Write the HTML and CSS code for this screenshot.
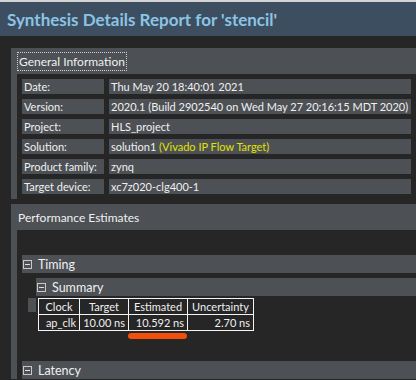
FILE: index.html
```html
<!DOCTYPE html>
<html lang="en">
<head>
    <meta charset="UTF-8">
    <meta name="viewport" content="width=device-width, initial-scale=1.0">
    <title>Synthesis Details Report</title>
    <link rel="stylesheet" href="styles.css">
</head>
<body>

    <div class="title-bar">
        <h1>Synthesis Details Report for 'stencil'</h1>
    </div>

    <div class="content">
        <!-- General information panel -->
        <div class="panel">
            <div class="panel-head"><span class="focused">General Information</span></div>
            <div class="panel-body">
                <table class="info">
                    <colgroup><col class="label-col"><col></colgroup>
                    <tr><td>Date:</td><td>Thu May 20 18:40:01 2021</td></tr>
                    <tr><td>Version:</td><td>2020.1 (Build 2902540 on Wed May 27 20:16:15 MDT 2020)</td></tr>
                    <tr><td>Project:</td><td>HLS_project</td></tr>
                    <tr><td>Solution:</td><td>solution1 <span class="flow">(Vivado IP Flow Target)</span></td></tr>
                    <tr><td>Product family:</td><td>zynq</td></tr>
                    <tr><td>Target device:</td><td>xc7z020-clg400-1</td></tr>
                </table>
            </div>
        </div>

        <!-- Performance panel -->
        <div class="panel">
            <div class="panel-head">Performance Estimates</div>
            <div class="panel-body perf">
                <div class="section">
                    <div class="section-head">
                        <svg class="toggle" width="9" height="9" viewBox="0 0 9 9"><rect x="0.5" y="0.5" width="8" height="8" fill="none" stroke="#c8c8c8"/><line x1="2" y1="4.5" x2="7" y2="4.5" stroke="#e0e0e0"/></svg>
                        Timing
                    </div>
                    <div class="section-body">
                        <div class="section inner">
                            <div class="section-head">
                                <svg class="toggle" width="9" height="9" viewBox="0 0 9 9"><rect x="0.5" y="0.5" width="8" height="8" fill="none" stroke="#c8c8c8"/><line x1="2" y1="4.5" x2="7" y2="4.5" stroke="#e0e0e0"/></svg>
                                Summary
                            </div>
                            <div class="summary">
                                <table class="timing">
                                    <colgroup><col class="c-clock"><col class="c-target"><col class="c-est"><col class="c-unc"></colgroup>
                                    <tr><th>Clock</th><th>Target</th><th>Estimated</th><th>Uncertainty</th></tr>
                                    <tr><td>ap_clk</td><td>10.00 ns</td><td class="estimated">10.592 ns<span class="mark"></span></td><td>2.70 ns</td></tr>
                                </table>
                            </div>
                        </div>
                    </div>
                </div>
                <div class="section">
                    <div class="section-head">
                        <svg class="toggle" width="9" height="9" viewBox="0 0 9 9"><rect x="0.5" y="0.5" width="8" height="8" fill="none" stroke="#c8c8c8"/><line x1="2" y1="4.5" x2="7" y2="4.5" stroke="#e0e0e0"/></svg>
                        Latency
                    </div>
                </div>
            </div>
        </div>
    </div>

</body>
</html>
```

FILE: styles.css
```css
body {
    font-family: Lato, "Open Sans", sans-serif;
    font-size: 11px;
    background-color: #262626;
    color: #f0f0f0;
    margin: 0;
    padding: 0;
    border-top: 2px solid #d4d4d4;
    overflow: hidden;
}

.title-bar {
    background-color: #3e4e61;
    height: 34px;
    padding-left: 7px;
    display: flex;
    align-items: center;
}

.title-bar h1 {
    margin: 0;
    font-size: 17px;
    font-weight: bold;
    color: #8bc4e4;
}

.content {
    padding: 12px 0 0 11px;
}

.panel {
    margin-bottom: 5px;
}

.panel-head {
    background-color: #4d5155;
    height: 26px;
    padding-left: 7px;
    display: flex;
    align-items: center;
    font-size: 12px;
}

.focused {
    outline: 1px dotted #d0d0d0;
    padding: 0 1px;
    line-height: 17px;
}

.panel-body {
    border-left: 6px solid #4d5155;
}

.info {
    width: 100%;
    table-layout: fixed;
    border-collapse: separate;
    border-spacing: 5px;
}

.label-col {
    width: 82px;
}

.info td {
    background-color: #4d5155;
    height: 15px;
    padding: 0 2px;
    line-height: 15px;
    white-space: nowrap;
    overflow: hidden;
}

.flow {
    color: #e2e200;
}

.perf {
    padding: 25px 0 0 5px;
}

.section {
    margin-bottom: 5px;
}

.section.inner {
    margin-bottom: 0;
}

.section-head {
    background-color: #4d5155;
    height: 18px;
    display: flex;
    align-items: center;
    gap: 6px;
    padding-left: 1px;
    font-size: 12.5px;
}

.section-body {
    padding: 5px 0 25px 6px;
}

.inner .section-head {
    margin-left: 8px;
}

/* small grey stub left of the summary table */
.summary {
    display: flex;
    align-items: flex-start;
    gap: 2px;
    padding-top: 2px;
}

.summary::before {
    content: "";
    width: 8px;
    height: 14px;
    background-color: #4d5155;
}

.timing {
    table-layout: fixed;
    border-collapse: collapse;
}

.c-clock { width: 41px; }
.c-target { width: 49px; }
.c-est { width: 59px; }
.c-unc { width: 66px; }

.timing th,
.timing td {
    border: 1px solid #f4f4f4;
    font-weight: normal;
    padding: 0 3px;
    height: 15px;
    line-height: 15px;
    white-space: nowrap;
}

.timing td {
    text-align: right;
}

.estimated {
    position: relative;
}

.mark {
    position: absolute;
    left: -1px;
    right: 0;
    top: 18px;
    height: 6px;
    border-radius: 3px;
    background-color: #f24e0c;
}
```
